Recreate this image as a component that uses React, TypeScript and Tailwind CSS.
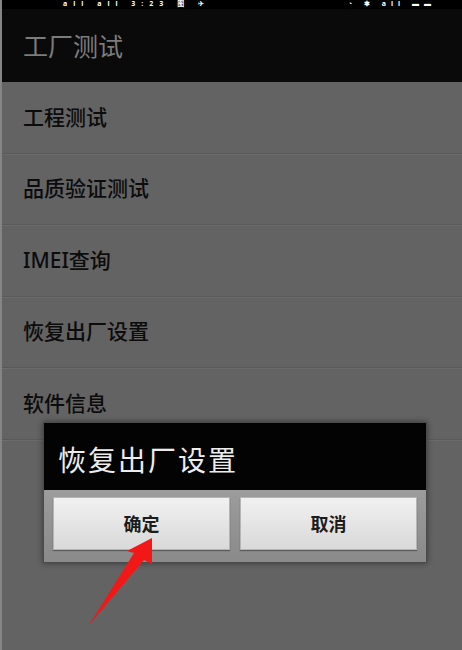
import React from "react";

const items = ["工程测试", "品质验证测试", "IMEI查询", "恢复出厂设置", "软件信息"];

export default function App() {
  return (
    <div
      className="relative w-[462px] h-[650px] overflow-hidden bg-[#636363] border-l-2 border-[#858585]"
      style={{ fontFamily: '"Noto Sans", "Noto Sans CJK SC", sans-serif' }}
    >
      {/* status bar */}
      <div className="h-[9px] bg-black flex justify-between items-start pl-[61px] pr-[26px]">
        <span className="text-white text-[7px] font-bold leading-[8px] tracking-[6px]">all all 3:23 图 ✈</span>
        <span className="text-white text-[7px] font-bold leading-[8px] tracking-[5px]">◔ ✱ all ▬▬</span>
      </div>
      {/* title bar */}
      <div className="h-[73px] bg-[#0a0a0a] flex items-center pl-[21px]">
        <span className="text-[25px] text-[#7c7c7c] leading-none mt-[2px]">工厂测试</span>
      </div>
      {/* list */}
      <div className="flex flex-col">
        {items.map((t) => (
          <div
            key={t}
            className="h-[71.5px] flex items-center pl-[21px] border-b border-[#5a5a5a] shadow-[0_1px_0_#6b6b6b]"
          >
            <span className="text-[21px] text-[#0c0c0c] font-medium leading-none">{t}</span>
          </div>
        ))}
      </div>

      {/* dialog */}
      <div className="absolute left-[41px] top-[422px] w-[384px] h-[141px] flex flex-col shadow-[0_0_6px_rgba(0,0,0,0.45)] border border-[#4a4a4a]">
        <div className="h-[67px] bg-[#030303] flex items-center pl-[14px] pt-[6px]">
          <span className="text-[28px] text-[#ececec] tracking-[2px] leading-none">恢复出厂设置</span>
        </div>
        <div className="flex-1 bg-gradient-to-b from-[#9c9c9c] to-[#8a8a8a] flex gap-[10px] pl-[9px] pr-[9px] pt-[7px] pb-[12px]">
          <button className="flex-1 bg-gradient-to-b from-[#f1f1f1] to-[#d9d9d9] border border-[#b5b5b5] shadow-[0_1px_1px_rgba(0,0,0,0.35)] flex items-center justify-center">
            <span className="text-[18px] font-bold text-[#1c1c1c] leading-none">确定</span>
          </button>
          <button className="flex-1 bg-gradient-to-b from-[#f1f1f1] to-[#d9d9d9] border border-[#b5b5b5] shadow-[0_1px_1px_rgba(0,0,0,0.35)] flex items-center justify-center">
            <span className="text-[18px] font-bold text-[#1c1c1c] leading-none">取消</span>
          </button>
        </div>
      </div>

      {/* red arrow */}
      <svg className="absolute left-0 top-0" width="462" height="650" viewBox="0 0 462 650">
        <polygon
          points="150,538 150,564 142,560 87,625 132,553 125,551"
          fill="#f21818"
        />
      </svg>
    </div>
  );
}
